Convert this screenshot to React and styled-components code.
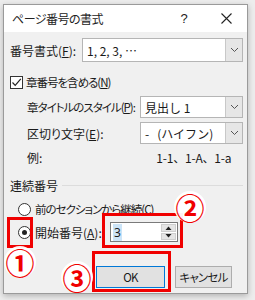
import React from 'react';
import styled, { createGlobalStyle } from 'styled-components';

const GlobalStyle = createGlobalStyle`
  html, body {
    margin: 0;
    padding: 0;
    background: #ededed;
  }
  body {
    font-family: "Noto Sans CJK JP", "Noto Sans", sans-serif;
    font-feature-settings: "palt";
  }
`;

// Whole screenshot area, annotations are placed over it
const Page = styled.div`
  position: relative;
  width: 255px;
  height: 300px;
  overflow: hidden;
  padding: 4px 0 0 3px;
  box-sizing: border-box;
`;

const Dialog = styled.div`
  width: 245px;
  height: 290px;
  box-sizing: border-box;
  border: 1px solid #9a9a9a;
  background: #f0f0f0;
  box-shadow: 0 2px 6px rgba(0, 0, 0, 0.25);
  display: flex;
  flex-direction: column;
`;

const TitleBar = styled.div`
  height: 27px;
  background: #ffffff;
  display: flex;
  align-items: center;
  padding-left: 8px;
  font-size: 12px;
  color: #222;
`;

const Title = styled.span`
  flex: 1;
  letter-spacing: -0.5px;
`;

const TitleButton = styled.span`
  width: 42px;
  display: flex;
  justify-content: center;
  align-items: center;
  font-size: 13px;
  color: #222;
  font-family: "Liberation Sans", sans-serif;
`;

const Body = styled.div`
  flex: 1;
  padding: 6px 4px 0 6px;
  display: flex;
  flex-direction: column;
  font-size: 12px;
  color: #1a1a1a;
`;

const Row = styled.div`
  display: flex;
  align-items: center;
  height: ${p => p.h || 22}px;
  margin-top: ${p => p.mt || 0}px;
  padding-left: ${p => p.indent || 0}px;
`;

// kana-heavy labels are set narrower, like the dialog's UI font
const Label = styled.span`
  width: ${p => (p.w ? `${p.w}px` : 'auto')};
  flex-shrink: 0;
  white-space: nowrap;
  font-size: ${p => (p.tight ? '11.5px' : '12px')};
  letter-spacing: ${p => (p.tight ? '-1px' : '0')};
  u {
    text-decoration: underline;
    text-underline-offset: 1px;
  }
`;

const Select = styled.div`
  flex: 1;
  height: 100%;
  box-sizing: border-box;
  border: 1px solid #b5b5b5;
  background: #fff;
  display: flex;
  align-items: center;
`;

const SelectText = styled.span`
  flex: 1;
  padding-left: 4px;
  font-size: 12px;
  font-feature-settings: normal;
  white-space: pre;
`;

const DropButton = styled.span`
  width: 16px;
  height: 100%;
  border-left: 1px solid #c8c8c8;
  background: #e6e6e6;
  display: flex;
  align-items: center;
  justify-content: center;
`;

const CheckBox = styled.span`
  width: 13px;
  height: 13px;
  box-sizing: border-box;
  border: 1px solid #333;
  background: #fff;
  margin-right: 3px;
  display: flex;
  align-items: center;
  justify-content: center;
`;

const Value = styled.span`
  margin-left: 114px;
  font-feature-settings: normal;
  letter-spacing: -0.2px;
`;

const Section = styled.div`
  display: flex;
  align-items: center;
  height: 18px;
  margin-top: 10px;
  gap: 4px;
`;

const Rule = styled.span`
  flex: 1;
  height: 1px;
  background: #dcdcdc;
`;

const Radio = styled.span`
  width: 13px;
  height: 13px;
  box-sizing: border-box;
  border-radius: 50%;
  border: 1px solid #333;
  background: #fff;
  margin-right: 4px;
  display: flex;
  align-items: center;
  justify-content: center;
  &::after {
    content: '';
    display: ${p => (p.checked ? 'block' : 'none')};
    width: 5px;
    height: 5px;
    border-radius: 50%;
    background: #222;
  }
`;

const Spin = styled.div`
  width: 68px;
  height: 20px;
  box-sizing: border-box;
  border: 1px solid #7a7a7a;
  background: #fff;
  display: flex;
  align-items: center;
`;

const SpinText = styled.span`
  flex: 1;
  padding-left: 2px;
  font-family: "Noto Sans", sans-serif;
  span {
    background: #cce4f7;
    padding: 0 1px;
  }
`;

const SpinButtons = styled.span`
  width: 15px;
  height: 16px;
  margin-right: 1px;
  display: flex;
  flex-direction: column;
  gap: 1px;
`;

const SpinBtn = styled.span`
  flex: 1;
  background: #e5e5e5;
  border: 1px solid #cfcfcf;
  display: flex;
  align-items: center;
  justify-content: center;
`;

const Buttons = styled.div`
  display: flex;
  justify-content: flex-end;
  gap: 10px;
  margin-top: 23px;
  padding-right: 11px;
`;

const Button = styled.button`
  width: ${p => p.w}px;
  height: 22px;
  box-sizing: border-box;
  border: 1px solid ${p => (p.primary ? '#0078d7' : '#adadad')};
  background: #e1e1e1;
  font-family: "Noto Sans CJK JP", sans-serif;
  font-feature-settings: "palt";
  font-size: 11.5px;
  letter-spacing: -0.8px;
  color: #1a1a1a;
  padding: 0;
`;

// Red annotation frames drawn over the dialog
const Frame = styled.div`
  position: absolute;
  left: ${p => p.x}px;
  top: ${p => p.y}px;
  width: ${p => p.w}px;
  height: ${p => p.h}px;
  box-sizing: border-box;
  border: 3px solid #f00000;
`;

const Marker = styled.div`
  position: absolute;
  left: ${p => p.x - 16}px;
  top: ${p => p.y - 16}px;
  width: 32px;
  height: 32px;
  border-radius: 50%;
  background: rgba(255, 255, 255, 0.95);
  color: #f00000;
  font-size: 29px;
  font-weight: 700;
  line-height: 32px;
  text-align: center;
  font-family: "Noto Sans CJK JP", sans-serif;
`;

const Chevron = () => (
  <svg width="9" height="6" viewBox="0 0 9 6">
    <path d="M1 1 L4.5 4.5 L8 1" fill="none" stroke="#555" strokeWidth="1" />
  </svg>
);

const Triangle = ({ up }) => (
  <svg width="7" height="4" viewBox="0 0 7 4">
    <path d={up ? 'M0.5 4 L3.5 0.5 L6.5 4 Z' : 'M0.5 0 L3.5 3.5 L6.5 0 Z'} fill="#222" />
  </svg>
);

const Combo = ({ children }) => (
  <Select>
    <SelectText>{children}</SelectText>
    <DropButton>
      <Chevron />
    </DropButton>
  </Select>
);

const App = () => (
  <>
    <GlobalStyle />
    <Page>
      <Dialog>
        <TitleBar>
          <Title>ページ番号の書式</Title>
          <TitleButton>?</TitleButton>
          <TitleButton>
            <svg width="11" height="11" viewBox="0 0 11 11">
              <path d="M0.5 0.5 L10.5 10.5 M10.5 0.5 L0.5 10.5" stroke="#222" strokeWidth="1.1" />
            </svg>
          </TitleButton>
        </TitleBar>
        <Body>
          <Row h={24}>
            <Label w={72}>番号書式(<u>F</u>):</Label>
            <Combo>1, 2, 3, …</Combo>
          </Row>
          <Row h={20} mt={10}>
            <CheckBox>
              <svg width="11" height="11" viewBox="0 0 11 11">
                <path d="M1.5 5.5 L4.2 8.3 L9.8 1.8" fill="none" stroke="#222" strokeWidth="1.2" />
              </svg>
            </CheckBox>
            <Label tight>章番号を含める(<u>N</u>)</Label>
          </Row>
          <Row mt={4} indent={17}>
            <Label tight w={113}>章タイトルのスタイル(<u>P</u>):</Label>
            <Combo>見出し 1</Combo>
          </Row>
          <Row mt={4} indent={17}>
            <Label w={113}>区切り文字(<u>E</u>):</Label>
            <Combo>-   (ハイフン)</Combo>
          </Row>
          <Row h={18} mt={4} indent={17}>
            <Label>例:</Label>
            <Value>1-1、1-A、1-a</Value>
          </Row>
          <Section>
            <Label>連続番号</Label>
            <Rule />
          </Section>
          <Row h={20} mt={5} indent={8}>
            <Radio />
            <Label tight>前のセクションから継続(<u>C</u>)</Label>
          </Row>
          <Row h={22} mt={2} indent={8}>
            <Radio checked />
            <Label w={75}>開始番号(<u>A</u>):</Label>
            <Spin>
              <SpinText>
                <span>3</span>
              </SpinText>
              <SpinButtons>
                <SpinBtn>
                  <Triangle up />
                </SpinBtn>
                <SpinBtn>
                  <Triangle />
                </SpinBtn>
              </SpinButtons>
            </Spin>
          </Row>
          <Buttons>
            <Button primary w={69}>OK</Button>
            <Button w={57}>キャンセル</Button>
          </Buttons>
        </Body>
      </Dialog>

      <Frame x={7} y={217} w={26} h={31} />
      <Frame x={102} y={213} w={81} h={35} />
      <Frame x={92} y={251} w={79} h={41} />
      <Marker x={20} y={262}>①</Marker>
      <Marker x={190} y={207}>②</Marker>
      <Marker x={77} y={277}>③</Marker>
    </Page>
  </>
);

export default App;
